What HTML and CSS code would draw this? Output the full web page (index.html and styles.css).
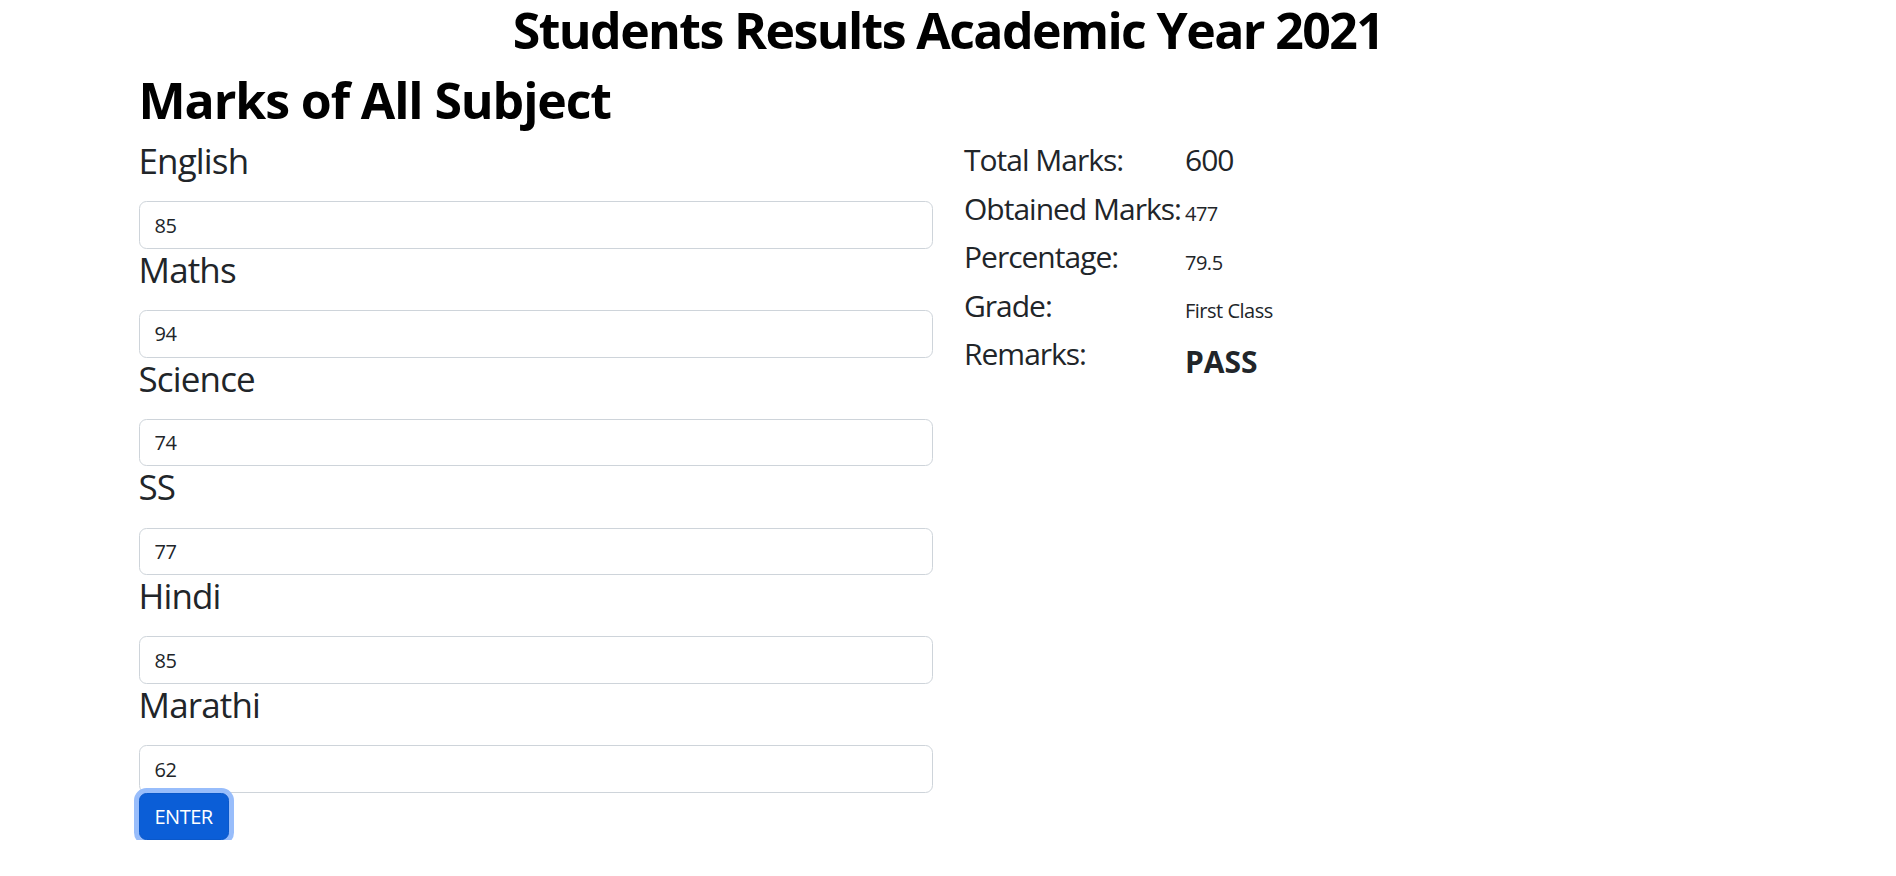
FILE: index.html
```html
<!DOCTYPE html>
<html lang="en">
<head>
<meta charset="utf-8">
<title>Students Results</title>
<link rel="stylesheet" href="styles.css">
</head>
<body>
<h1 class="page-title">Students Results Academic Year 2021</h1>
<main class="page">
  <h1 class="section-title">Marks of All Subject</h1>
  <div class="columns">
    <form class="marks-form">
      <label class="subject">English</label>
      <input class="mark-input" type="text" value="85">
      <label class="subject">Maths</label>
      <input class="mark-input" type="text" value="94">
      <label class="subject">Science</label>
      <input class="mark-input" type="text" value="74">
      <label class="subject">SS</label>
      <input class="mark-input" type="text" value="77">
      <label class="subject">Hindi</label>
      <input class="mark-input" type="text" value="85">
      <label class="subject">Marathi</label>
      <input class="mark-input" type="text" value="62">
      <button class="enter-btn" type="button">ENTER</button>
    </form>
    <section class="results">
      <div class="result-row">
        <div class="result-label">Total Marks:</div>
        <div class="result-value big">600</div>
      </div>
      <div class="result-row">
        <div class="result-label">Obtained Marks:</div>
        <div class="result-value small">477</div>
      </div>
      <div class="result-row">
        <div class="result-label">Percentage:</div>
        <div class="result-value small">79.5</div>
      </div>
      <div class="result-row">
        <div class="result-label">Grade:</div>
        <div class="result-value small">First Class</div>
      </div>
      <div class="result-row">
        <div class="result-label">Remarks:</div>
        <div class="result-value strong">PASS</div>
      </div>
    </section>
  </div>
</main>
</body>
</html>
```

FILE: styles.css
```css
* { box-sizing: border-box; }

body {
  margin: 0;
  font-family: "Open Sans", "Noto Sans", "Liberation Sans", sans-serif;
  font-size: 20px;
  line-height: 1.5;
  letter-spacing: -0.5px;
  color: #212529;
  background: #fff;
}

.page-title {
  margin: 0 0 10px;
  font-size: 50px;
  line-height: 60px;
  font-weight: 700;
  letter-spacing: -1.6px;
  color: #000;
  text-align: center;
}

.page {
  padding-left: 138.5px;
}

.section-title {
  margin: 0 0 10px;
  font-size: 50px;
  line-height: 60px;
  font-weight: 700;
  letter-spacing: -1.1px;
  color: #000;
}

.columns {
  display: flex;
  gap: 31px;
}

.marks-form {
  width: 794.5px;
  display: flex;
  flex-direction: column;
  align-items: flex-start;
}

.subject {
  display: block;
  font-size: 35px;
  line-height: 42px;
  font-weight: 400;
  letter-spacing: -0.85px;
  margin-bottom: 19.3px;
}

.mark-input {
  display: block;
  width: 100%;
  height: 47.5px;
  padding: 7.5px 15px;
  font: inherit;
  font-size: 20px;
  line-height: 30px;
  letter-spacing: -0.5px;
  color: #212529;
  border: 1.25px solid #ced4da;
  border-radius: 7.5px;
  background: #fff;
  outline: none;
}

.enter-btn {
  height: 47.5px;
  padding: 7.5px 15px;
  font: inherit;
  font-size: 20px;
  line-height: 30px;
  letter-spacing: -0.5px;
  color: #fff;
  background: #0b5ed7;
  border: 1.25px solid #0a58ca;
  border-radius: 7.5px;
  box-shadow: 0 0 0 5px #98bdfb;
}

.results {
  display: flex;
  flex-direction: column;
  padding-top: 2px;
}

.result-row {
  display: flex;
  align-items: flex-start;
  height: 48.6px;
}

.result-label {
  width: 221px;
  flex: none;
  white-space: nowrap;
  font-size: 30px;
  line-height: 36px;
  letter-spacing: -1px;
}

.result-value.big {
  font-size: 30px;
  line-height: 36px;
  letter-spacing: -1px;
}

.result-value.small {
  font-size: 20px;
  line-height: 30px;
  padding-top: 8.5px;
}

.result-value.strong {
  font-size: 30px;
  line-height: 36px;
  font-weight: 700;
  letter-spacing: 0;
  padding-top: 7.4px;
}
```
